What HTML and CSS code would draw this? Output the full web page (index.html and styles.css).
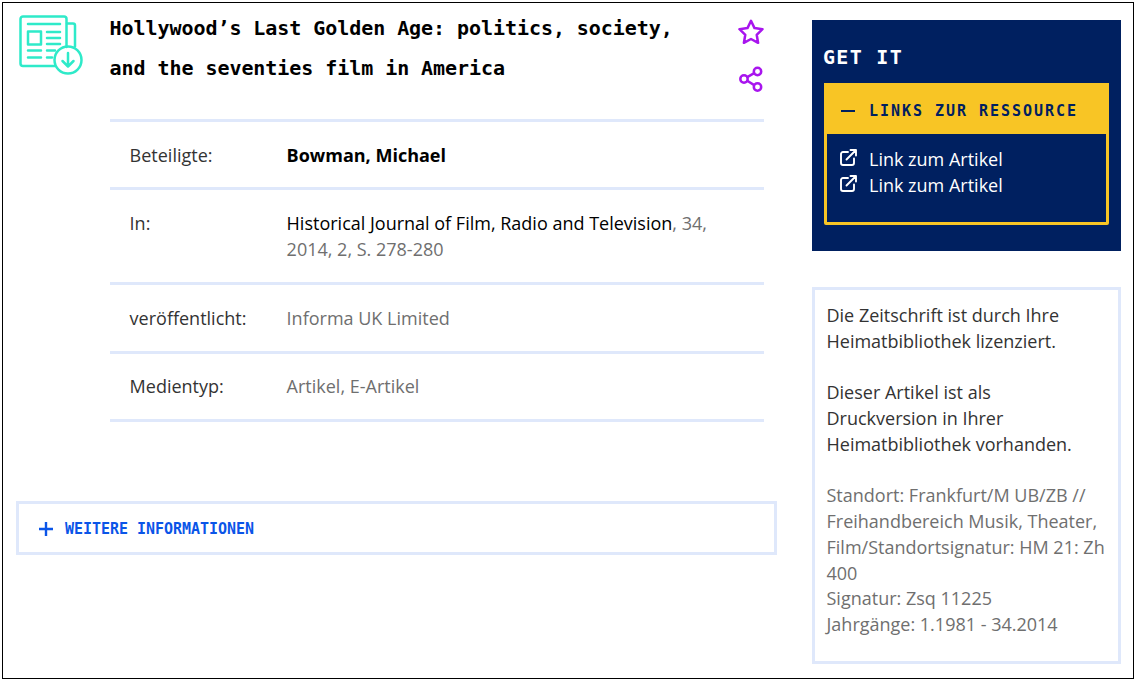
FILE: index.html
```html
<!DOCTYPE html>
<html lang="de">
<head>
<meta charset="utf-8">
<title>Hollywood’s Last Golden Age</title>
<link rel="stylesheet" href="styles.css">
</head>
<body>
<div class="frame">
  <main class="main">
    <div class="head">
      <svg class="type-icon" width="66" height="64" viewBox="0 0 66 64" fill="none" stroke="#2eeac9" stroke-width="2.5" stroke-linecap="round" stroke-linejoin="round">
        <path d="M36 51H4a2.500 2.500 0 0 1-2.500-2.500V4A2.500 2.500 0 0 1 4 1.500h41A2.500 2.500 0 0 1 47.500 4v28"/>
        <path d="M48 8.500h6a2 2 0 0 1 2 2v21"/>
        <path d="M9 9h32"/>
        <rect x="9" y="16.500" width="13" height="13"/>
        <path d="M28 17h13M28 23h13M28 29h13M9 35.500h13M9 42.500h13M28 42.500h5M28 35.500h8"/>
        <circle cx="49" cy="45" r="13.500"/>
        <path d="M49 38v13M43.500 46l5.500 5.500 5.500-5.500"/>
      </svg>
      <h1 class="title">Hollywood’s Last Golden Age: politics, society, and the seventies film in America</h1>
      <div class="actions">
        <svg width="26" height="26" viewBox="0 0 26 26" fill="none" stroke="#a815ee" stroke-width="2.500" stroke-linejoin="round"><path d="M13 1.800l3.500 7.300 8 1.100-5.800 5.600 1.400 8-7.100-3.800-7.100 3.800 1.400-8-5.800-5.600 8-1.100z"/></svg>
        <svg width="26" height="26" viewBox="0 0 26 26" fill="none" stroke="#a815ee" stroke-width="2.500"><circle cx="19.500" cy="5.500" r="3.700"/><circle cx="6" cy="13" r="3.700"/><circle cx="19.500" cy="21" r="3.700"/><path d="M9.200 11.200l7-4M9.200 14.800l7 4.300"/></svg>
      </div>
    </div>
    <dl class="meta">
      <div class="row"><dt>Beteiligte:</dt><dd class="strong">Bowman, Michael</dd></div>
      <div class="row"><dt>In:</dt><dd><span class="dark">Historical Journal of Film, Radio and Television</span>, 34, 2014, 2, S. 278-280</dd></div>
      <div class="row"><dt>veröffentlicht:</dt><dd>Informa UK Limited</dd></div>
      <div class="row"><dt>Medientyp:</dt><dd>Artikel, E-Artikel</dd></div>
    </dl>
    <div class="more">
      <svg width="14" height="14" viewBox="0 0 14 14" stroke="#0a55e8" stroke-width="2.400" fill="none"><path d="M7 0v14M0 7h14"/></svg>
      <span>WEITERE INFORMATIONEN</span>
    </div>
  </main>
  <aside class="side">
    <section class="getit">
      <h2>GET IT</h2>
      <div class="panel">
        <div class="panel-head">
          <svg width="14" height="2" viewBox="0 0 14 2"><path d="M0 1h14" stroke="#002060" stroke-width="2"/></svg>
          <span>LINKS ZUR RESSOURCE</span>
        </div>
        <ul class="links">
          <li><svg width="17" height="17" viewBox="0 0 17 17" fill="none" stroke="#fff" stroke-width="1.900" stroke-linecap="round" stroke-linejoin="round"><path d="M8 3H3a2 2 0 0 0-2 2v9a2 2 0 0 0 2 2h9a2 2 0 0 0 2-2V9.500"/><path d="M6.500 10.500L15.500 1.500M10.500 1h5.500v5.500"/></svg>Link zum Artikel</li>
          <li><svg width="17" height="17" viewBox="0 0 17 17" fill="none" stroke="#fff" stroke-width="1.900" stroke-linecap="round" stroke-linejoin="round"><path d="M8 3H3a2 2 0 0 0-2 2v9a2 2 0 0 0 2 2h9a2 2 0 0 0 2-2V9.500"/><path d="M6.500 10.500L15.500 1.500M10.500 1h5.500v5.500"/></svg>Link zum Artikel</li>
        </ul>
      </div>
    </section>
    <section class="holdings">
      <p>Die Zeitschrift ist durch Ihre Heimatbibliothek lizenziert.</p>
      <p>Dieser Artikel ist als<br>Druckversion in Ihrer<br>Heimatbibliothek vorhanden.</p>
      <p class="grey">Standort: Frankfurt/M UB/ZB // Freihandbereich Musik, Theater, Film/Standortsignatur: HM 21: Zh 400<br>Signatur: Zsq 11225<br>Jahrgänge: 1.1981 - 34.2014</p>
    </section>
  </aside>
</div>
</body>
</html>
```

FILE: styles.css
```css
* { box-sizing: border-box; }
html, body { margin: 0; padding: 0; background: #fff; }
body {
  padding: 2px 1px 2px 2px;
  font-family: "Open Sans", sans-serif;
  font-size: 18px;
  line-height: 26px;
  color: #000;
}
.frame {
  height: 677px;
  border: 1px solid #000;
  display: flex;
  overflow: hidden;
}
.main {
  width: 761px;
  margin-left: 13px;
  flex: none;
}
.head {
  display: flex;
  height: 116px;
  margin-left: 3px;
  padding-top: 5px;
}
.type-icon {
  flex: none;
  margin-top: 7px;
  margin-right: 24.6px;
}
.title {
  margin: 0;
  width: 600px;
  font-family: "DejaVu Sans Mono", monospace;
  font-weight: 700;
  font-size: 20px;
  letter-spacing: -0.06px;
  line-height: 40px;
}
.actions {
  margin-left: 28.2px;
  display: flex;
  flex-direction: column;
  gap: 21px;
  padding-top: 11px;
}
.meta {
  margin: 0 13px 0 94px;
  border-top: 3px solid #dfe8fb;
}
.row {
  display: flex;
  padding: 20px 20px 19px 19.6px;
  border-bottom: 3px solid #dfe8fb;
}
.row:nth-child(2) { padding-bottom: 20px; }
.row:nth-child(3) { padding-bottom: 20px; }
.row:nth-child(4) { padding-top: 19px; padding-bottom: 20px; }
.row dt { width: 157px; flex: none; color: #333; }
.row dd { margin: 0; flex: 1; color: #6f6f6f; padding-right: 30px; }
.row dd.strong { color: #000; font-weight: 700; }
.dark { color: #000; }
.more {
  margin-top: 79px;
  height: 54px;
  border: 3px solid #dfe8fb;
  display: flex;
  align-items: center;
  gap: 12px;
  padding: 1px 0 0 20px;
  color: #0a55e8;
  font-family: "DejaVu Sans Mono", monospace;
  font-weight: 700;
  font-size: 15px;
  letter-spacing: -0.03px;
}
.side {
  width: 309px;
  margin-left: 35px;
  padding-top: 17px;
  flex: none;
}
.getit {
  background: #002060;
  color: #fff;
  height: 231px;
  padding: 24px 12px 0 12px;
}
.getit h2 {
  margin: 0 0 13px -1px;
  font-family: "DejaVu Sans Mono", monospace;
  font-weight: 700;
  font-size: 20px;
  line-height: 26px;
  letter-spacing: 1.3px;
}
.panel {
  height: 142px;
  border: 3px solid #f8c525;
  border-radius: 2px;
}
.panel-head {
  background: #f8c525;
  height: 51px;
  margin: -3px -3px 0;
  padding: 4px 0 0 17px;
  display: flex;
  align-items: center;
  gap: 14px;
  color: #002060;
  font-family: "DejaVu Sans Mono", monospace;
  font-weight: 700;
  font-size: 15px;
  letter-spacing: 1.97px;
}
.links {
  list-style: none;
  margin: 0;
  padding: 12px 0 0 13px;
}
.links li {
  display: flex;
  align-items: flex-start;
  gap: 12px;
}
.links svg { margin-top: 3px; flex: none; }
.holdings {
  margin-top: 36px;
  height: 377px;
  border: 3px solid #dfe8fb;
  padding: 13px 11px 0 11.5px;
  color: #333;
  line-height: 25.75px;
}
.holdings p { margin: 0 0 25.75px; }
.holdings p.grey { color: #6f6f6f; margin: 0; }
```
